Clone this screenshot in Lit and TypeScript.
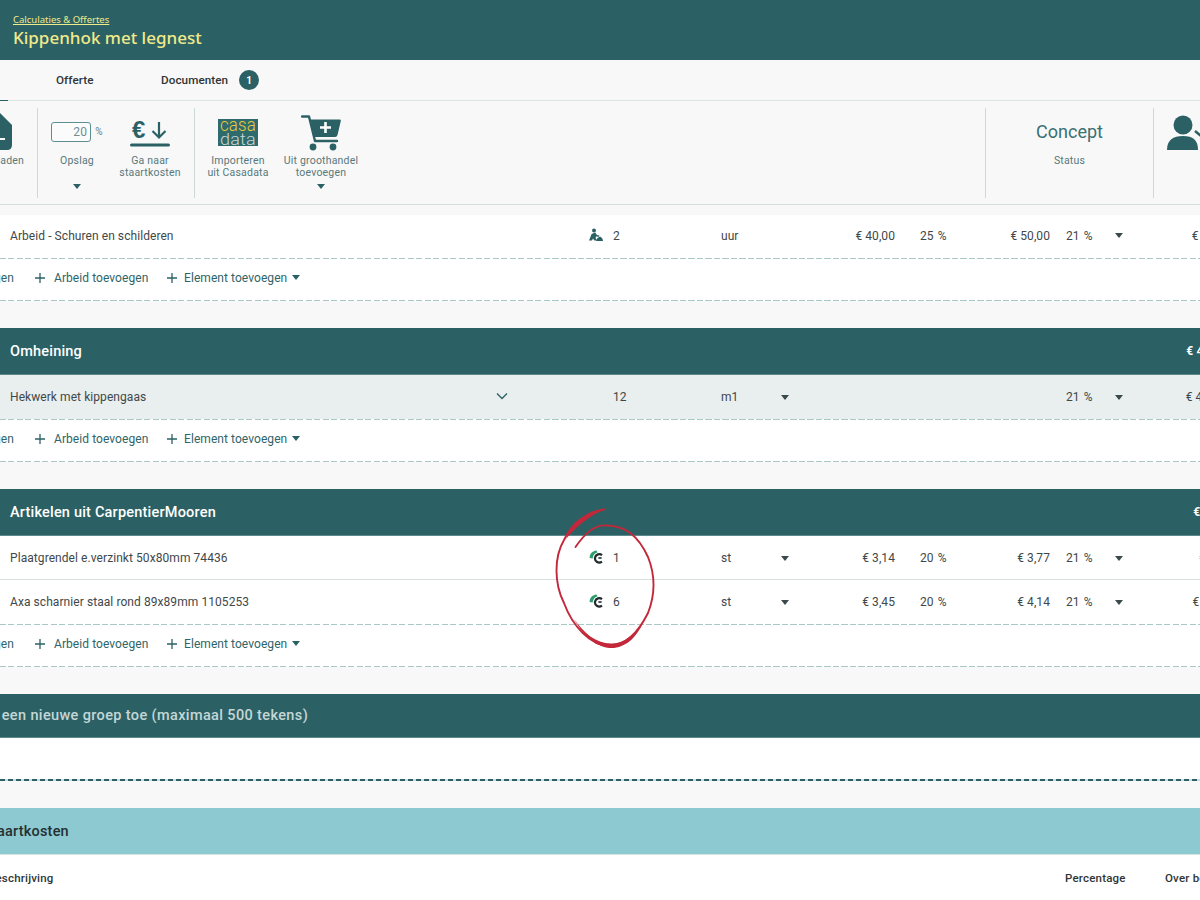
import { LitElement, html, css, svg } from "lit";
import { customElement } from "lit/decorators.js";

type Row = { name: string; icon?: string; chevron?: boolean; qty: string; unit: string; unitArrow?: boolean; price?: string; pct?: string; price2?: string; vat: string; total: string; shade?: boolean; line?: boolean };

const labour = svg`<svg class="ri" viewBox="0 0 14 14" width="14" height="14"><circle cx="5" cy="2.4" r="2" fill="#2b6165"/><path d="M0 12.5 L2.6 6 L6.2 4.6 L8 7 L10.4 7.4 L10 8.8 L7 8.4 L6.6 10 L8 12.5 L5.4 12.5 L4 10.6 L3 12.5 Z" fill="#2b6165"/><path d="M7 13 C8 9.6 10 8.6 11.4 8.8 C12.8 9.4 13.8 11 14 13 Z" fill="#2b6165"/></svg>`;
const clogo = svg`<svg class="ri" viewBox="0 0 14 14" width="14" height="14"><path d="M0.6 8 C0.6 4 3 1 7.4 0.4 L8.6 2.6 C6 3 4.2 4.8 3.6 8.4 Z" fill="#2f9e6e"/><path d="M13 5.2 C10.8 3.2 6.6 4.2 6 7.8 C5.6 11.4 9.6 14 13 11.6" fill="none" stroke="#20292b" stroke-width="2.2"/><path d="M9.4 8 H12.6" stroke="#20292b" stroke-width="1.6"/></svg>`;

@customElement("app-root")
export class AppRoot extends LitElement {
  static styles = css`
    :host { display: block; position: relative; width: 1200px; height: 900px; overflow: hidden; background: #f8f8f8; font-family: Roboto, "Liberation Sans", sans-serif; font-size: 12px; color: #3f4849; letter-spacing: .07px; }
    .top { height: 60px; box-sizing: border-box; background: #2b6165; padding: 14px 0 0 13px; color: #f1ea8a; font-family: "Noto Sans", "Open Sans", sans-serif; }
    .crumb { font-size: 9.5px; line-height: 12px; text-decoration: underline; letter-spacing: 0; }
    .title { font-size: 17px; line-height: 23px; font-weight: 500; letter-spacing: 0; }
    .tabs { height: 40px; border-bottom: 1px solid #dbe5e5; display: flex; align-items: center; position: relative; font-weight: 500; color: #2f3536; font-size: 11.7px; }
    .t1 { margin-left: 56px; width: 105px; }
    .t2 { width: 78px; }
    .badge { width: 20px; height: 20px; border-radius: 50%; background: #2b6165; color: #fff; font-size: 10px; font-weight: 700; display: flex; align-items: center; justify-content: center; letter-spacing: 0; }
    .active { position: absolute; left: 0; bottom: -1px; width: 8px; height: 1px; background: #2b6165; }
    .bar { height: 104px; box-sizing: border-box; padding: 7px 0 6px; border-bottom: 1px solid #d3dede; display: flex; }
    .grp { display: flex; box-sizing: border-box; border-left: 1px solid #ccd9d9; }
    .g1 { width: 37px; border: 0; overflow: hidden; }
    .g2 { width: 157px; }
    .g3 { width: 791px; padding-left: 9px; }
    .g4 { width: 168px; justify-content: center; }
    .g5 { flex: 1; overflow: hidden; }
    .item { display: flex; flex-direction: column; align-items: center; flex: none; font-size: 10.5px; line-height: 12px; color: #57797c; text-align: center; letter-spacing: .2px; }
    .ico { height: 47px; display: flex; align-items: flex-start; flex: none; }
    .item .lbl { height: 29px; }
    .caret { width: 0; height: 0; border-left: 4.5px solid transparent; border-right: 4.5px solid transparent; border-top: 5px solid #2b6165; flex: none; }
    .i0 { width: 60px; margin-left: -36px; flex: none; }
    .opslag { width: 78px; }
    .ga { width: 68px; }
    .imp { width: 68px; }
    .grh { width: 90px; margin-left: 4px; }
    .pct { display: flex; align-items: center; gap: 4px; margin-top: 14px; color: #5f8588; font-size: 10px; }
    .inp { width: 40px; height: 20px; box-sizing: border-box; border: 1px solid #5d8f92; border-radius: 3px; font-size: 12px; color: #6f8f92; text-align: right; line-height: 18px; padding-right: 3px; background: #fbfbfb; }
    .status { align-items: center; }
    .concept { font-size: 18px; line-height: 24px; color: #3a7074; margin-top: 12px; height: 35px; letter-spacing: 0; }
    .gap { height: 27px; }
    .gap0 { height: 10px; }
    .row { display: grid; grid-template-columns: 10px 579px 24px 108px 60px 64px 50px 25px 60px 70px 16px 48px 70px 48px; align-items: center; height: 44px; box-sizing: border-box; white-space: nowrap; background: #fff; }
    .row.first { height: 43px; padding-bottom: 2px; }
    .row.shade { background: #e9eeee; }
    .row.line { border-bottom: 1px solid #d9dfdf; padding-top: 1px; }
    .name { grid-column: 2; display: flex; justify-content: space-between; padding-right: 81px; }
    .ri { grid-column: 3; display: block; margin-top: -2px; }
    .qty { grid-column: 4; }
    .unit { grid-column: 5; }
    .ua { grid-column: 6; }
    .p1 { grid-column: 7; text-align: right; }
    .pc { grid-column: 9; word-spacing: 1px; }
    .p2 { grid-column: 10; text-align: right; }
    .vat { grid-column: 12; word-spacing: 1px; }
    .va { grid-column: 13; margin-left: 1px; }
    .tot { grid-column: 14; text-align: right; }
    .first .tot { margin-right: -6px; }
    .row .caret { border-top-color: #3a4a4c; }
    .head { height: 47px; background: #2b6165; color: #fff; font-size: 14.5px; font-weight: 500; border-bottom: 1px solid #5f8a8c; letter-spacing: .2px; }
    .head .hn { grid-column: 2 / 14; }
    .head .tot { font-size: 12px; font-weight: 700; margin-right: -3px; }
    .dash { height: 1px; background: repeating-linear-gradient(90deg, #a9c8c6 0 6px, transparent 6px 8.5px); background-color: #fff; }
    .add { height: 41px; box-sizing: border-box; padding-bottom: 4px; background: #fff; display: flex; align-items: center; color: #2f6468; white-space: nowrap; }
    .a0 { margin-left: -126px; width: 140px; flex: none; text-align: right; }
    .a { display: flex; align-items: center; flex: none; }
    .a1 { width: 132px; margin-left: 21px; }
    .plus { width: 10px; height: 10px; margin-right: 9px; flex: none; }
    .a2 .plus { margin-right: 7px; }
    .a2 .caret { margin-left: 5px; border-top-color: #2b6165; }
    .new { height: 44px; box-sizing: border-box; background: #2b6165; color: #c4d6d6; font-size: 14.5px; font-weight: 500; display: flex; align-items: center; white-space: nowrap; letter-spacing: .37px; border-bottom: 1px solid #5f8a8c; }
    .new span { margin-left: -37px; }
    .blank { height: 41px; background: #fff; }
    .dash2 { height: 2px; background: repeating-linear-gradient(90deg, #2b6165 0 5px, transparent 5px 8px); background-color: #cfdcdc; }
    .light { height: 47px; box-sizing: border-box; background: #8cc9d1; color: #262f30; font-size: 14.5px; font-weight: 500; display: flex; align-items: center; border-bottom: 1px solid #d5e3e3; letter-spacing: .2px; }
    .light span { margin-left: -17px; }
    .foot { height: 45px; background: #fff; display: flex; align-items: center; font-weight: 500; color: #2f3536; white-space: nowrap; font-size: 11.5px; letter-spacing: .2px; }
    .f0 { margin-left: -12px; width: 1077px; flex: none; }
    .f1 { width: 100px; flex: none; }
    .mark { position: absolute; left: 540px; top: 495px; pointer-events: none; }
  `;

  private rowTpl(r: Row, first = false) {
    const cls = `row ${first ? "first" : ""} ${r.shade ? "shade" : ""} ${r.line ? "line" : ""}`;
    return html`<div class=${cls}>
      <div class="name"><span>${r.name}</span>${r.chevron
        ? html`<svg width="12" height="12" viewBox="0 0 12 12"><path d="M1 3.5 L6 8.5 L11 3.5" fill="none" stroke="#2b6165" stroke-width="1.3"/></svg>`
        : ""}</div>
      ${r.icon === "labour" ? labour : r.icon === "c" ? clogo : ""}
      <div class="qty">${r.qty}</div>
      <div class="unit">${r.unit}</div>
      ${r.unitArrow ? html`<div class="ua"><div class="caret"></div></div>` : ""}
      ${r.price ? html`<div class="p1">${r.price}</div>` : ""}
      ${r.pct ? html`<div class="pc">${r.pct}</div>` : ""}
      ${r.price2 ? html`<div class="p2">${r.price2}</div>` : ""}
      <div class="vat">${r.vat}</div>
      <div class="va"><div class="caret"></div></div>
      <div class="tot">${r.total}</div>
    </div>`;
  }

  private headTpl(name: string, total: string) {
    return html`<div class="row head"><div class="hn">${name}</div><div class="tot">${total}</div></div>`;
  }

  private plusIcon() {
    return html`<svg class="plus" viewBox="0 0 10 10"><path d="M5 0 V10 M0 5 H10" stroke="#2b6165" stroke-width="1.3"/></svg>`;
  }

  private addTpl() {
    return html`<div class="dash"></div>
      <div class="add">
        <div class="a0">Materiaal toevoegen</div>
        <div class="a a1">${this.plusIcon()}Arbeid toevoegen</div>
        <div class="a a2">${this.plusIcon()}Element toevoegen<div class="caret"></div></div>
      </div>
      <div class="dash"></div>`;
  }

  render() {
    return html`
      <div class="top">
        <div class="crumb">Calculaties &amp; Offertes</div>
        <div class="title">Kippenhok met legnest</div>
      </div>
      <div class="tabs">
        <div class="active"></div>
        <div class="t1">Offerte</div>
        <div class="t2">Documenten</div>
        <div class="badge">1</div>
      </div>
      <div class="bar">
        <div class="grp g1">
          <div class="item i0">
            <div class="ico"><svg width="32" height="43" viewBox="0 0 32 43" style="transform:translateX(2px)"><path d="M16 1 L32 17 V37 Q32 42 27 42 H5 Q0 42 0 37 V17 Z" fill="#2b6165"/><path d="M20 30 H25 V32 H20 Z" fill="#f8f8f8"/></svg></div>
            <div class="lbl">Downloaden</div>
          </div>
        </div>
        <div class="grp g2">
          <div class="item opslag">
            <div class="ico"><div class="pct"><div class="inp">20</div>%</div></div>
            <div class="lbl">Opslag</div>
            <div class="caret"></div>
          </div>
          <div class="item ga">
            <div class="ico">
              <svg width="42" height="34" viewBox="0 0 42 34" style="margin-top:8px">
                <text x="3" y="22" font-family="Liberation Sans, sans-serif" font-size="24" fill="#2b6165" font-weight="700">€</text>
                <path d="M30 6 V21 M23.5 15 L30 21.5 L36.5 15" fill="none" stroke="#2b6165" stroke-width="2.2"/>
                <path d="M2.5 29 H39.5" stroke="#2b6165" stroke-width="3" stroke-linecap="round"/>
              </svg>
            </div>
            <div class="lbl">Ga naar<br />staartkosten</div>
          </div>
        </div>
        <div class="grp g3">
          <div class="item imp">
            <div class="ico">
              <svg width="40" height="28" viewBox="0 0 40 28" style="margin-top:11px">
                <rect width="40" height="27" fill="#2f6a6c"/>
                <text x="2" y="12" textLength="36" lengthAdjust="spacingAndGlyphs" font-family="Roboto, sans-serif" font-size="19" font-weight="300" fill="#e8c93a">casa</text>
                <text x="2" y="25.5" textLength="36" lengthAdjust="spacingAndGlyphs" font-family="Roboto, sans-serif" font-size="16" font-weight="300" fill="#c6d6d6">data</text>
              </svg>
            </div>
            <div class="lbl">Importeren<br />uit Casadata</div>
          </div>
          <div class="item grh">
            <div class="ico">
              <svg width="40" height="36" viewBox="0 0 40 36" style="margin-top:7px">
                <path d="M1 1.5 H8 L14 26 H36" fill="none" stroke="#2b6165" stroke-width="2.4" stroke-linecap="round" stroke-linejoin="round"/>
                <path d="M9.5 4.5 H39 Q40 4.5 39.8 6 L36.5 20 Q36 22 34 22 H13.5 Z" fill="#2b6165"/>
                <path d="M24.5 7 V18 M19 12.5 H30" stroke="#fff" stroke-width="2.6"/>
                <circle cx="12" cy="32" r="3.4" fill="#2b6165"/><circle cx="32" cy="32" r="3.4" fill="#2b6165"/>
              </svg>
            </div>
            <div class="lbl">Uit groothandel<br />toevoegen</div>
            <div class="caret"></div>
          </div>
        </div>
        <div class="grp g4">
          <div class="item status">
            <div class="concept">Concept</div>
            <div class="lbl">Status</div>
          </div>
        </div>
        <div class="grp g5">
          <svg width="46" height="40" viewBox="0 0 46 40" style="margin:7px 0 0 13px;flex:none">
            <circle cx="16" cy="10" r="9.5" fill="#2b6165"/>
            <path d="M0 35 C0 25 6 21 16 21 C26 21 31 25 31 35 Z" fill="#2b6165"/>
            <path d="M28 16 L34 21" stroke="#2b6165" stroke-width="2.4"/>
          </svg>
        </div>
      </div>
      <div class="gap0"></div>

      ${this.rowTpl({ name: "Arbeid - Schuren en schilderen", icon: "labour", qty: "2", unit: "uur", price: "€ 40,00", pct: "25 %", price2: "€ 50,00", vat: "21 %", total: "€ 100,00" }, true)}
      ${this.addTpl()}
      <div class="gap"></div>

      ${this.headTpl("Omheining", "€ 456,00")}
      ${this.rowTpl({ name: "Hekwerk met kippengaas", chevron: true, qty: "12", unit: "m1", unitArrow: true, vat: "21 %", total: "€ 456,00", shade: true })}
      ${this.addTpl()}
      <div class="gap"></div>

      ${this.headTpl("Artikelen uit CarpentierMooren", "€ 28,61")}
      ${this.rowTpl({ name: "Plaatgrendel e.verzinkt 50x80mm 74436", icon: "c", qty: "1", unit: "st", unitArrow: true, price: "€ 3,14", pct: "20 %", price2: "€ 3,77", vat: "21 %", total: "€ 3,77", line: true })}
      ${this.rowTpl({ name: "Axa scharnier staal rond 89x89mm 1105253", icon: "c", qty: "6", unit: "st", unitArrow: true, price: "€ 3,45", pct: "20 %", price2: "€ 4,14", vat: "21 %", total: "€ 24,84" })}
      ${this.addTpl()}
      <div class="gap"></div>

      <div class="new"><span>Voeg een nieuwe groep toe (maximaal 500 tekens)</span></div>
      <div class="blank"></div>
      <div class="dash2"></div>
      <div class="gap"></div>
      <div class="light"><span>Staartkosten</span></div>
      <div class="foot">
        <div class="f0">Beschrijving</div>
        <div class="f1">Percentage</div>
        <div class="f1">Over bedrag</div>
      </div>

      <svg class="mark" width="140" height="165" viewBox="0 0 140 165">
        <path d="M35.5 52 C45 38 55 29 67 30.5 C85 31 98 40 108 62 C116 82 115 100 108 118 C98 138 85 150 70 151 C50 151 32 130 24 108 C14 88 14 62 24 45 C32 28 45 18 64 14.5" fill="none" stroke="#c3283a" stroke-width="1.9" stroke-linecap="round"/>
        <path d="M34 124 C46 146 62 154 74 153 C88 151 97 141 103 128 C95 139 85 148 72 148.5 C56 149 44 138 34 124 Z" fill="#c3283a"/>
        <path d="M26 44 C34 26 48 15 66 13.5 C54 19 40 27 26 44 Z" fill="#c3283a"/>
      </svg>
    `;
  }
}
